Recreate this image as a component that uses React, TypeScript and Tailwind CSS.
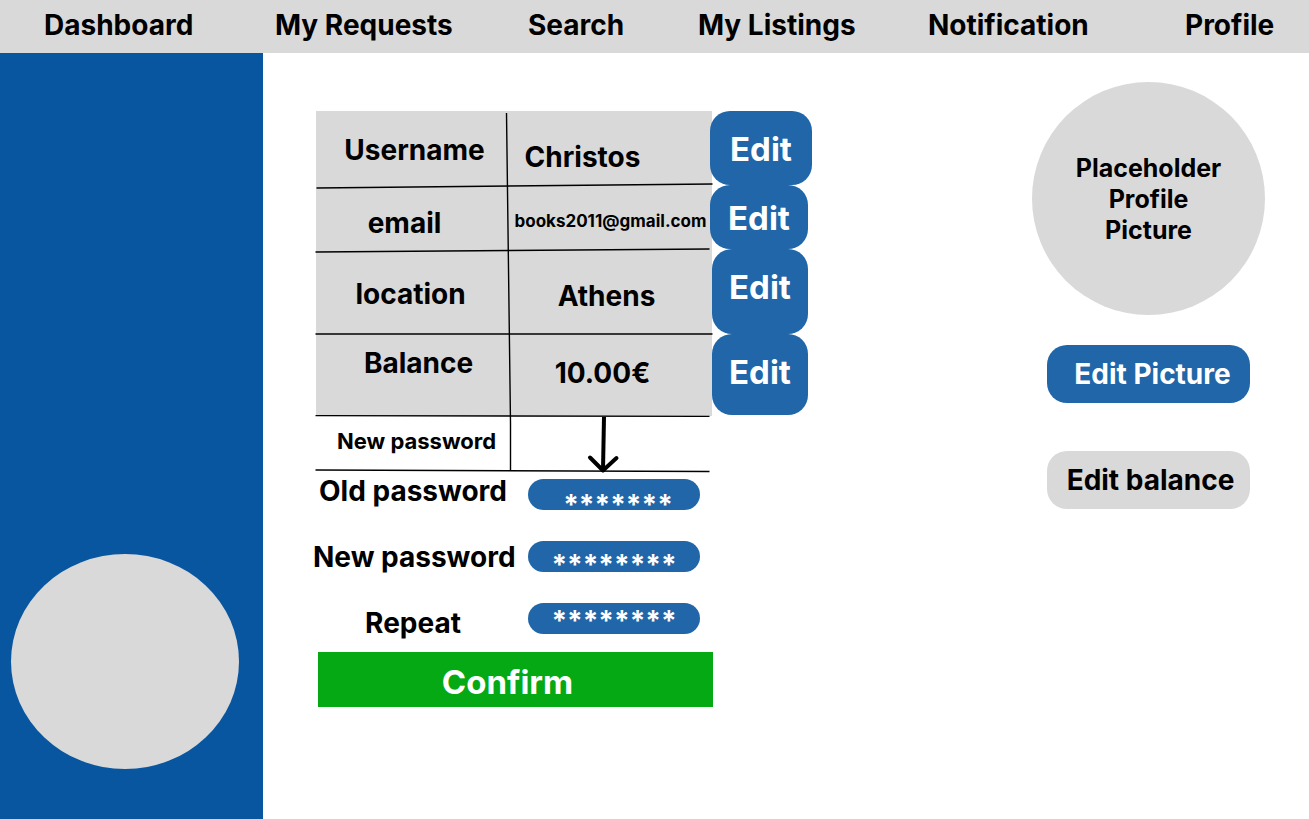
import React from 'react';

const navItems = ['Dashboard', 'My Requests', 'Search', 'My Listings', 'Notification', 'Profile'];

type Row = {
  label: string;
  value: string;
  height: string;
  labelClass: string;
  valueClass: string;
  buttonClass: string;
};

const rows: Row[] = [
  {
    label: 'Username',
    value: 'Christos',
    height: 'h-[74px]',
    labelClass: 'pt-1 pl-1 text-[28px]',
    valueClass: 'pt-[18px] pr-14 text-[28px]',
    buttonClass: '-ml-0.5 h-[74px] w-[102px] pt-1',
  },
  {
    label: 'email',
    value: 'books2011@gmail.com',
    height: 'h-16',
    labelClass: 'pt-3 pr-4 text-[28px]',
    valueClass: 'pt-2 text-[17px]',
    buttonClass: '-ml-0.5 h-16 w-[98px] pt-1',
  },
  {
    label: 'location',
    value: 'Athens',
    height: 'h-[85px]',
    labelClass: 'pt-1 pr-1 text-[28px]',
    valueClass: 'pt-2 pr-2 text-[28px]',
    buttonClass: 'h-[85px] w-24 pb-2',
  },
  {
    label: 'Balance',
    value: '10.00€',
    height: 'h-[82px]',
    labelClass: 'pb-6 pl-3 text-[28px]',
    valueClass: 'pb-1 pr-4 text-[28px]',
    buttonClass: 'h-[81px] w-24 pb-1',
  },
];

const passwordFields = [
  { id: 'old-password', label: 'Old password', value: '*******', labelClass: 'pb-2', inputClass: 'pt-5 pl-2' },
  { id: 'new-password', label: 'New password', value: '********', labelClass: '', inputClass: 'pt-4' },
  { id: 'repeat-password', label: 'Repeat', value: '********', labelClass: 'pt-2', inputClass: 'pt-1' },
];

function NavBar() {
  return (
    <nav className="grid h-[53px] grid-cols-[231fr_253fr_170fr_230fr_257fr_124fr] items-center bg-[#d9d9d9] pb-1 pl-11 text-[28px] leading-9">
      {navItems.map((item) => (
        <a key={item} href="#" className="whitespace-nowrap">
          {item}
        </a>
      ))}
    </nav>
  );
}

function TableLines() {
  return (
    <svg
      className="pointer-events-none absolute top-0 left-0"
      width="398"
      height="364"
      viewBox="0 0 398 364"
      fill="none"
      stroke="#000"
      strokeWidth="1.4"
      overflow="visible"
      aria-hidden="true"
    >
      <path d="M0.5 77 L396.5 73" />
      <path d="M-0.5 141 L393.5 138" />
      <path d="M-0.5 223 H396.5" />
      <path d="M-0.5 304.6 L393.5 305.4" />
      <path d="M-0.5 359 L393.5 360.5" />
      <path d="M190.5 2 L194.5 312 V359" />
      <path d="M288 306 L287 359" strokeWidth="4" />
      <path d="M274 346.5 L287 359.5 L300.5 347" strokeWidth="4" strokeLinecap="round" strokeLinejoin="round" />
    </svg>
  );
}

function AccountTable() {
  return (
    <div className="relative ml-[3px]">
      <table className="w-[496px] table-fixed border-collapse text-center">
        <colgroup>
          <col className="w-[193px]" />
          <col className="w-[203px]" />
          <col className="w-[100px]" />
        </colgroup>
        <tbody>
          {rows.map((row) => (
            <tr key={row.label} className={row.height}>
              <th scope="row" className={`bg-[#d9d9d9] leading-8 ${row.labelClass}`}>
                {row.label}
              </th>
              <td className={`bg-[#d9d9d9] leading-8 ${row.valueClass}`}>{row.value}</td>
              <td className="p-0 align-top">
                <button
                  type="button"
                  aria-label={`Edit ${row.label}`}
                  className={`block rounded-[20px] bg-[#2066a8] text-[33px] text-white ${row.buttonClass}`}
                >
                  Edit
                </button>
              </td>
            </tr>
          ))}
          <tr className="h-[54px]">
            <th scope="row" className="pb-1 pl-2 text-[22px] leading-8">
              New password
            </th>
            <td />
            <td />
          </tr>
        </tbody>
      </table>
      <TableLines />
    </div>
  );
}

function PasswordForm() {
  return (
    <form className="pt-[9px]" onSubmit={(event) => event.preventDefault()}>
      <div className="flex flex-col gap-[31px]">
        {passwordFields.map((field) => (
          <div
            key={field.id}
            className="grid grid-cols-[200px_172px] grid-rows-[31px] items-center gap-[15px]"
          >
            <label
              htmlFor={field.id}
              className={`text-center text-[28px] leading-8 whitespace-nowrap ${field.labelClass}`}
            >
              {field.label}
            </label>
            <input
              id={field.id}
              type="text"
              defaultValue={field.value}
              className={`h-[31px] w-full rounded-full bg-[#2066a8] text-center text-[28px] leading-8 text-white outline-none ${field.inputClass}`}
            />
          </div>
        ))}
      </div>
      <button
        type="submit"
        className="mt-[18px] ml-[5px] block h-[55px] w-[395px] bg-[#05a914] pt-1 pr-4 text-[33px] leading-10 text-white"
      >
        Confirm
      </button>
    </form>
  );
}

export default function App() {
  return (
    <div className="flex min-h-screen flex-col bg-white font-['Inter',sans-serif] font-bold text-black">
      <NavBar />
      <div className="flex grow">
        <aside className="flex w-[263px] shrink-0 items-end bg-[#08569f] pb-[50px] pl-[11px]">
          <div className="h-[215px] w-[228px] rounded-[50%] bg-[#d9d9d9]" />
        </aside>
        <main className="flex grow items-start justify-between pr-11 pl-[50px]">
          <section className="pt-[58px]">
            <AccountTable />
            <PasswordForm />
          </section>
          <section className="flex flex-col items-center pt-[29px]">
            <div className="flex size-[233px] items-center justify-center rounded-full bg-[#d9d9d9]">
              <p className="w-40 pt-0.5 text-center text-[25px] leading-[31px]">Placeholder Profile Picture</p>
            </div>
            <button
              type="button"
              className="mt-[30px] h-[58px] w-[203px] rounded-[20px] bg-[#2066a8] pl-2 text-[28px] text-white"
            >
              Edit Picture
            </button>
            <button
              type="button"
              className="mt-[48px] h-[58px] w-[203px] rounded-[20px] bg-[#d9d9d9] pl-1 text-[28px] whitespace-nowrap"
            >
              Edit balance
            </button>
          </section>
        </main>
      </div>
    </div>
  );
}
